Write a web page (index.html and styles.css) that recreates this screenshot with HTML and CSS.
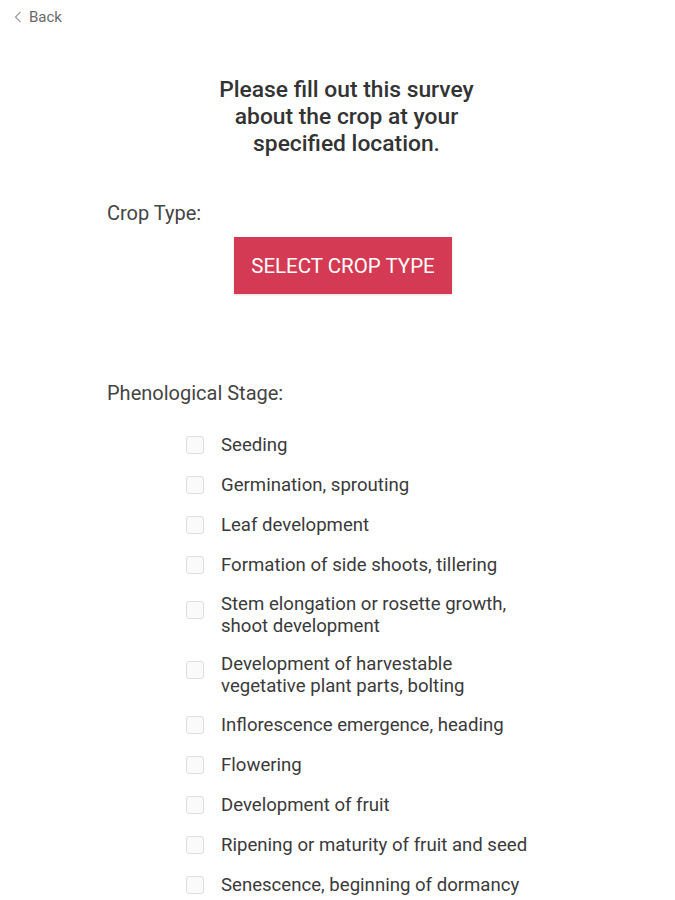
FILE: index.html
```html
<!DOCTYPE html>
<html>
<head>
<meta charset="utf-8">
<link rel="stylesheet" href="styles.css">
</head>
<body>
<div class="page">
  <div class="topbar">
    <svg class="chev" width="8" height="12" viewBox="0 0 8 12"><path d="M6.5 0.8 L1.5 6 L6.5 11.2" fill="none" stroke="#9a9a9a" stroke-width="1.2"/></svg>
    <span class="back">Back</span>
  </div>
  <h1 class="title">Please fill out this survey<br>about the crop at your<br>specified location.</h1>
  <div class="label crop-label">Crop Type:</div>
  <div class="btn-wrap"><button class="btn">SELECT CROP TYPE</button></div>
  <div class="label stage-label">Phenological Stage:</div>
  <ul class="stages">
    <li><span class="box"></span><span class="txt">Seeding</span></li>
    <li><span class="box"></span><span class="txt">Germination, sprouting</span></li>
    <li><span class="box"></span><span class="txt">Leaf development</span></li>
    <li><span class="box"></span><span class="txt">Formation of side shoots, tillering</span></li>
    <li class="multi"><span class="box"></span><span class="txt">Stem elongation or rosette growth,<br>shoot development</span></li>
    <li class="multi"><span class="box"></span><span class="txt">Development of harvestable<br>vegetative plant parts, bolting</span></li>
    <li><span class="box"></span><span class="txt">Inflorescence emergence, heading</span></li>
    <li><span class="box"></span><span class="txt">Flowering</span></li>
    <li><span class="box"></span><span class="txt">Development of fruit</span></li>
    <li><span class="box"></span><span class="txt">Ripening or maturity of fruit and seed</span></li>
    <li><span class="box"></span><span class="txt">Senescence, beginning of dormancy</span></li>
  </ul>
</div>
</body>
</html>
```
FILE: styles.css
```css
html, body { margin: 0; padding: 0; background: #fff; }
body { font-family: Roboto, "Noto Sans", sans-serif; color: #3a3a3a; }
.page { width: 675px; height: 900px; overflow: hidden; }
.topbar { display: flex; align-items: center; height: 34px; padding-left: 14px; gap: 7px; }
.chev { display: block; }
.back { font-size: 15px; color: #6a6a6a; }
.title { margin: 42px 0 0 0; padding-left: 18px; text-align: center; font-size: 22.8px; font-weight: 500; line-height: 27px; color: #333; }
.label { font-size: 20px; color: #444; padding-left: 107px; line-height: 24px; }
.crop-label { margin-top: 44px; }
.btn-wrap { padding-left: 234px; margin-top: 12px; }
.btn { display: block; width: 218px; height: 57px; border: none; background: #d43a53; color: #fff; font-family: Roboto, sans-serif; font-size: 20.5px; padding: 0; box-shadow: 0 1px 2px rgba(0,0,0,0.15); }
.stage-label { margin-top: 87px; }
.stages { list-style: none; margin: 20px 0 0 0; padding: 0 0 0 186px; }
.stages li { display: flex; align-items: center; gap: 17px; padding: 9px 0; }
.stages li.multi { align-items: flex-start; padding: 8px 0; }
.box { width: 16px; height: 16px; border: 1px solid #dedede; border-radius: 3px; background: #fafafa; flex: none; }
.multi .box { margin-top: 8px; }
.txt { font-size: 18.6px; line-height: 22px; color: #3a3a3a; }
```
